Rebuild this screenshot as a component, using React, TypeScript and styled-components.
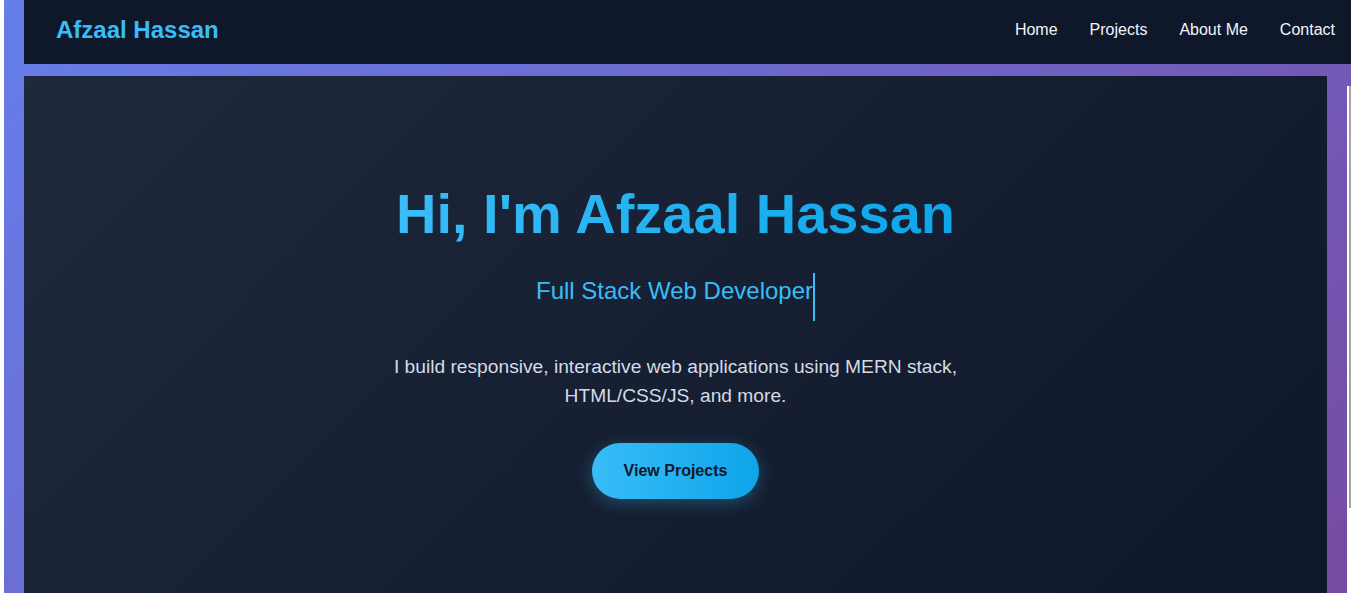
import styled, { createGlobalStyle } from 'styled-components';

const navLinks = ['Home', 'Projects', 'About Me', 'Contact'];

const GlobalStyle = createGlobalStyle`
  * {
    box-sizing: border-box;
  }
  html, body {
    margin: 0;
    padding: 0;
    height: 100%;
    overflow: hidden;
  }
  body {
    background: #ffffff;
    font-family: 'Liberation Sans', Arial, sans-serif;
  }
`;

const App = () => {
  return (
    <>
      <GlobalStyle />
      <Frame>
        <Navbar>
          <Logo>Afzaal Hassan</Logo>
          <NavList>
            {navLinks.map((link) => (
              <NavLink key={link} href="#">
                {link}
              </NavLink>
            ))}
          </NavList>
        </Navbar>
        <Hero>
          <Title>Hi, I'm Afzaal Hassan</Title>
          <Subtitle>
            Full Stack Web Developer
            <Cursor />
          </Subtitle>
          <Intro>
            I build responsive, interactive web applications using MERN stack, HTML/CSS/JS, and more.
          </Intro>
          <CtaButton>View Projects</CtaButton>
        </Hero>
        <ScrollTrack>
          <ScrollThumb />
        </ScrollTrack>
      </Frame>
    </>
  );
};

export default App;

const Frame = styled.div`
  position: relative;
  display: flex;
  flex-direction: column;
  margin-left: 4px;
  width: calc(100% - 4px);
  min-height: 100vh;
  padding: 0 24px 0 20px;
  background: linear-gradient(135deg, #667eea 0%, #764ba2 100%);
`;

const Navbar = styled.header`
  display: flex;
  justify-content: space-between;
  align-items: center;
  height: 64px;
  margin-right: -24px;
  margin-bottom: 12px;
  padding: 0 16px 5px 32px;
  background-color: #0f172a;
`;

const Logo = styled.div`
  font-size: 24px;
  font-weight: 700;
  color: #38bdf8;
`;

const NavList = styled.nav`
  display: flex;
  gap: 32px;
`;

const NavLink = styled.a`
  font-size: 16px;
  color: #f1f5f9;
  text-decoration: none;
`;

const Hero = styled.section`
  flex: 1;
  display: flex;
  flex-direction: column;
  align-items: center;
  padding-top: 106px;
  text-align: center;
  background: linear-gradient(135deg, #1e293b 0%, #0f172a 100%);
`;

const Title = styled.h1`
  margin: 0;
  font-size: 56px;
  font-weight: 700;
  line-height: 1.15;
  background: linear-gradient(90deg, #38bdf8, #0ea5e9);
  -webkit-background-clip: text;
  background-clip: text;
  color: transparent;
`;

const Subtitle = styled.h2`
  margin: 27px 0 0;
  font-size: 24px;
  font-weight: 400;
  color: #38bdf8;
`;

const Cursor = styled.span`
  display: inline-block;
  width: 2px;
  height: 48px;
  vertical-align: -22px;
  background-color: #38bdf8;
`;

const Intro = styled.p`
  max-width: 600px;
  margin: 32px 0 0;
  font-size: 19.2px;
  line-height: 1.5;
  color: #d5dbe4;
`;

const CtaButton = styled.button`
  margin-top: 32px;
  padding: 19px 32px;
  border: none;
  border-radius: 30px;
  font-family: inherit;
  font-size: 16px;
  font-weight: 700;
  color: #0f172a;
  background: linear-gradient(90deg, #38bdf8, #0ea5e9);
  box-shadow: 0 4px 16px rgba(56, 189, 248, 0.3);
  cursor: pointer;
`;

const ScrollTrack = styled.div`
  position: absolute;
  top: 86px;
  right: 0;
  bottom: 0;
  width: 4px;
  background-color: #ffffff;
`;

const ScrollThumb = styled.div`
  position: absolute;
  top: 0;
  right: 0;
  width: 2px;
  height: 422px;
  background-color: #a3a3a3;
`;
